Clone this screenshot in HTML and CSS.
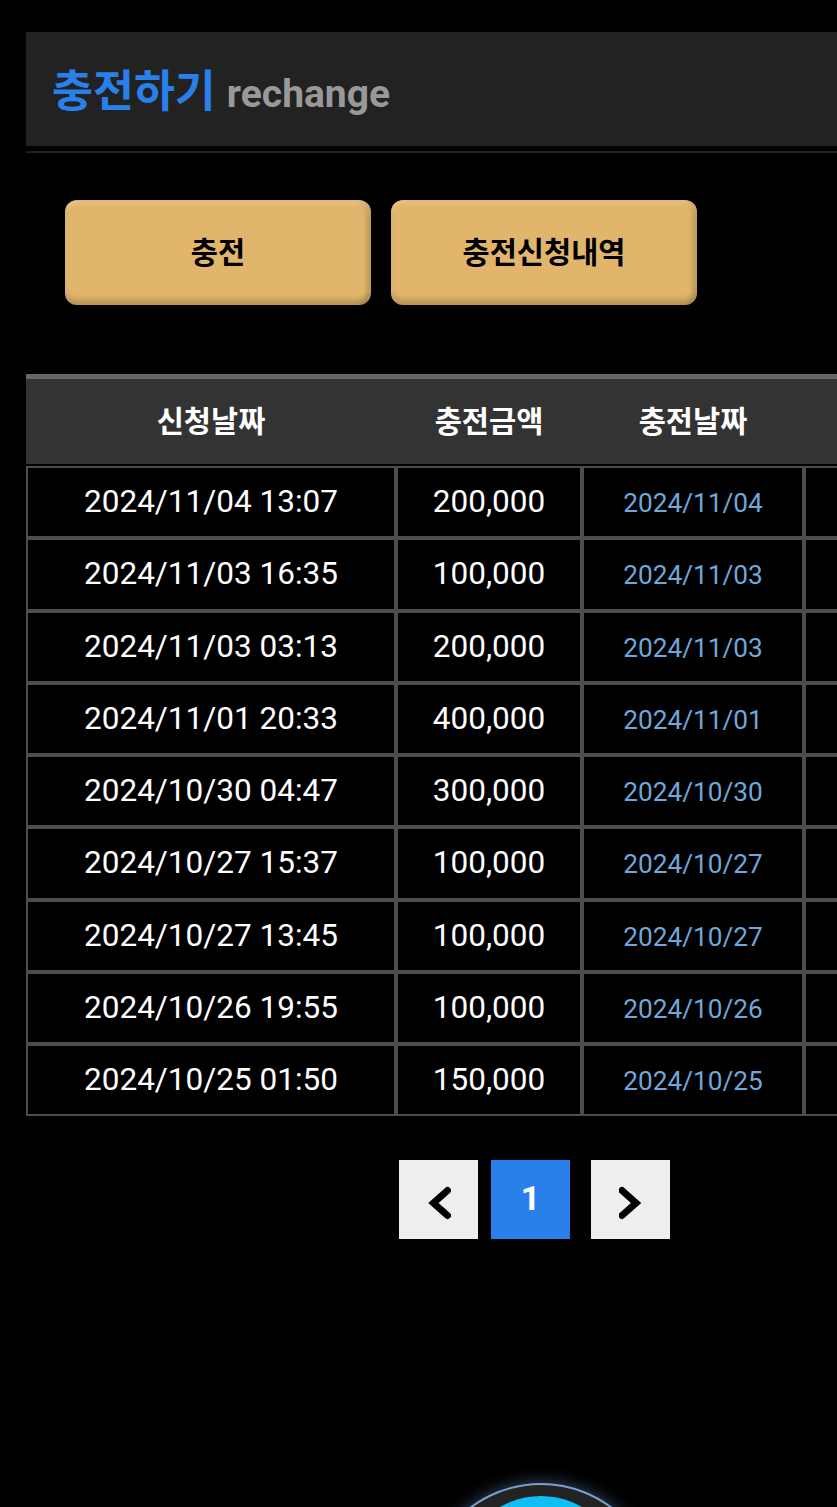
FILE: index.html
```html
<!DOCTYPE html>
<html lang="ko">
<head>
    <meta charset="UTF-8">
    <meta name="viewport" content="width=device-width, initial-scale=1.0">
    <title>충전하기</title>
    <link rel="stylesheet" href="styles.css">
</head>
<body>

    <div class="content">

        <!-- Page title -->
        <h2 class="page-title">충전하기 <span class="page-title-sub">rechange</span></h2>
        <div class="title-rule"></div>

        <!-- Tabs -->
        <div class="tab-buttons">
            <a class="tab-button" href="javascript:void(0);">충전</a>
            <a class="tab-button" href="javascript:void(0);">충전신청내역</a>
        </div>

        <!-- Request history -->
        <table class="history">
            <colgroup>
                <col class="col-request">
                <col class="col-amount">
                <col class="col-date">
                <col class="col-status">
            </colgroup>
            <thead>
                <tr>
                    <th>신청날짜</th>
                    <th>충전금액</th>
                    <th>충전날짜</th>
                    <th></th>
                </tr>
            </thead>
            <tbody>
                <tr><td>2024/11/04 13:07</td><td>200,000</td><td class="date-cell">2024/11/04</td><td></td></tr>
                <tr><td>2024/11/03 16:35</td><td>100,000</td><td class="date-cell">2024/11/03</td><td></td></tr>
                <tr><td>2024/11/03 03:13</td><td>200,000</td><td class="date-cell">2024/11/03</td><td></td></tr>
                <tr><td>2024/11/01 20:33</td><td>400,000</td><td class="date-cell">2024/11/01</td><td></td></tr>
                <tr><td>2024/10/30 04:47</td><td>300,000</td><td class="date-cell">2024/10/30</td><td></td></tr>
                <tr><td>2024/10/27 15:37</td><td>100,000</td><td class="date-cell">2024/10/27</td><td></td></tr>
                <tr><td>2024/10/27 13:45</td><td>100,000</td><td class="date-cell">2024/10/27</td><td></td></tr>
                <tr><td>2024/10/26 19:55</td><td>100,000</td><td class="date-cell">2024/10/26</td><td></td></tr>
                <tr><td>2024/10/25 01:50</td><td>150,000</td><td class="date-cell">2024/10/25</td><td></td></tr>
            </tbody>
        </table>

        <!-- Pagination -->
        <div class="pagination">
            <a class="page-link page-arrow" href="javascript:void(0);" aria-label="이전">
                <svg width="24" height="36" viewBox="0 0 24 36"><path d="M20.5 5.5 L6.5 18 L20.5 30.5" fill="none" stroke="#000" stroke-width="7" stroke-linecap="round" stroke-linejoin="miter"/></svg>
            </a>
            <a class="page-link active" href="javascript:void(0);">1</a>
            <a class="page-link page-arrow" href="javascript:void(0);" aria-label="다음">
                <svg width="24" height="36" viewBox="0 0 24 36"><path d="M3 5.5 L17 18 L3 30.5" fill="none" stroke="#000" stroke-width="7" stroke-linecap="round" stroke-linejoin="miter"/></svg>
            </a>
        </div>

    </div>

    <!-- Floating button, cut off by the window -->
    <div class="float-button"><div class="float-button-inner"></div></div>

</body>
</html>
```

FILE: styles.css
```css
html, body {
    height: 1507px;
    overflow: hidden;
}

body {
    position: relative;
    margin: 0;
    background-color: #000;
    font-family: Roboto, "Noto Sans CJK KR", sans-serif;
}

.content {
    padding: 32px 0 0 26px;
}

.page-title {
    box-sizing: border-box;
    height: 114px;
    margin: 0;
    padding: 3px 0 0 26px;
    background-color: #222;
    color: #2a80ea;
    font-size: 44.5px;
    font-weight: 700;
    line-height: 114px;
    white-space: nowrap;
}

.page-title-sub {
    color: #999;
    font-size: 39px;
}

.title-rule {
    height: 2px;
    margin-top: 5px;
    background-color: #222;
}

.tab-buttons {
    display: flex;
    gap: 20px;
    margin: 47px 0 0 39px;
}

.tab-button {
    display: block;
    box-sizing: border-box;
    width: 306px;
    height: 105px;
    padding-top: 2px;
    border-radius: 12px;
    background-color: #e1b56c;
    box-shadow: inset 0 4px 4px rgba(255, 255, 255, 0.2), inset 0 -6px 5px rgba(0, 0, 0, 0.16), inset 4px 0 4px rgba(255, 255, 255, 0.06), inset -5px 0 4px rgba(0, 0, 0, 0.12);
    color: #000;
    font-size: 29.5px;
    font-weight: 700;
    line-height: 103px;
    text-align: center;
    text-decoration: none;
}

.history {
    width: 1000px;
    margin-top: 69px;
    border-collapse: separate;
    border-spacing: 0;
    table-layout: fixed;
}

.col-request { width: 370px; }
.col-amount { width: 186px; }
.col-date { width: 222px; }
.col-status { width: 222px; }

.history th {
    box-sizing: border-box;
    height: 92px;
    padding: 0 0 5px;
    border-top: 5px solid #666;
    border-bottom: 2px solid #000;
    background-color: #333;
    color: #fff;
    font-size: 29.5px;
    font-weight: 700;
    text-align: center;
}

.history td {
    box-sizing: border-box;
    height: 72.25px;
    padding: 0 0 1px;
    border: 2px solid #4d4d4d;
    color: #fff;
    font-size: 31.5px;
    text-align: center;
}

.history td.date-cell {
    padding: 2px 0 0;
    color: #6ea8dc;
    font-size: 26.2px;
}

.pagination {
    display: flex;
    margin: 44px 0 0 373px;
}

.page-link {
    display: flex;
    align-items: center;
    justify-content: center;
    width: 79px;
    height: 79px;
    background-color: #eee;
    color: #000;
    font-size: 34px;
    font-weight: 700;
    text-decoration: none;
}

.page-arrow {
    box-sizing: border-box;
    padding-top: 6px;
}

.page-link.active {
    box-sizing: border-box;
    margin: 0 21px 0 13px;
    padding-bottom: 3px;
    background-color: #2a80ea;
    color: #fff;
}

.float-button {
    position: absolute;
    top: 1483px;
    left: 423px;
    box-sizing: border-box;
    width: 236px;
    height: 236px;
    padding: 11px 34px;
    border: 2px solid #7d9fd0;
    border-radius: 50%;
    background-color: #222;
    box-shadow: 0 0 16px rgba(120, 170, 230, 0.45);
}

.float-button-inner {
    width: 164px;
    height: 164px;
    border-radius: 50%;
    background-color: #10bdf5;
}
```
